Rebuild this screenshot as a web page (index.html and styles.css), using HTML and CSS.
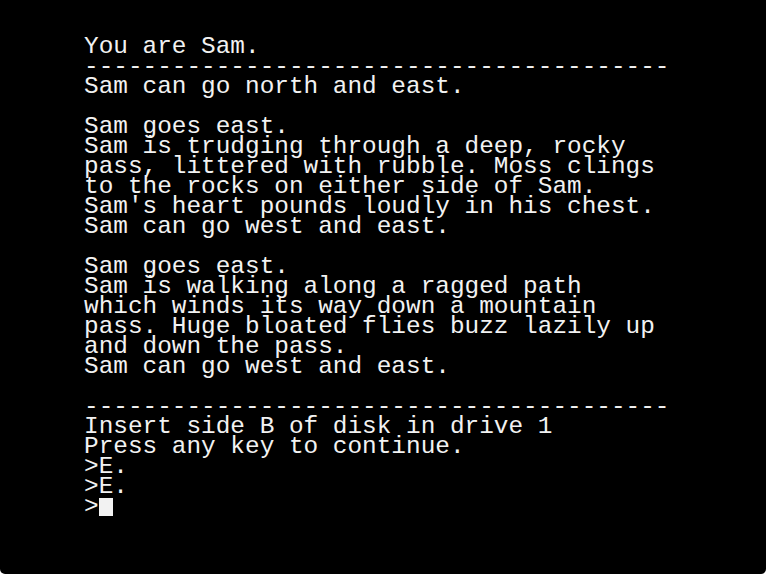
FILE: index.html
```html
<!DOCTYPE html>
<html>
<head>
<meta charset="utf-8">
<link rel="stylesheet" href="styles.css">
</head>
<body>
<div class="screen">
<pre class="term">You are Sam.
----------------------------------------
Sam can go north and east.

Sam goes east.
Sam is trudging through a deep, rocky
pass, littered with rubble. Moss clings
to the rocks on either side of Sam.
Sam's heart pounds loudly in his chest.
Sam can go west and east.

Sam goes east.
Sam is walking along a ragged path
which winds its way down a mountain
pass. Huge bloated flies buzz lazily up
and down the pass.
Sam can go west and east.

----------------------------------------
Insert side B of disk in drive 1
Press any key to continue.
&gt;E.
&gt;E.
&gt;<span class="cursor"></span></pre>
</div>
</body>
</html>
```

FILE: styles.css
```css
html, body {
  margin: 0;
  padding: 0;
  background: #fff;
}
.screen {
  width: 766px;
  height: 574px;
  background: #000;
  border-radius: 0 0 5px 5px;
  box-sizing: border-box;
  padding: 37px 0 0 84px;
  overflow: hidden;
}
.term {
  margin: 0;
  font-family: "Liberation Mono", "DejaVu Sans Mono", monospace;
  font-size: 24.4px;
  line-height: 20px;
  color: #f2f2f2;
  white-space: pre;
}
.cursor {
  display: inline-block;
  width: 14px;
  height: 18px;
  background: #f2f2f2;
  vertical-align: -3px;
}
```
